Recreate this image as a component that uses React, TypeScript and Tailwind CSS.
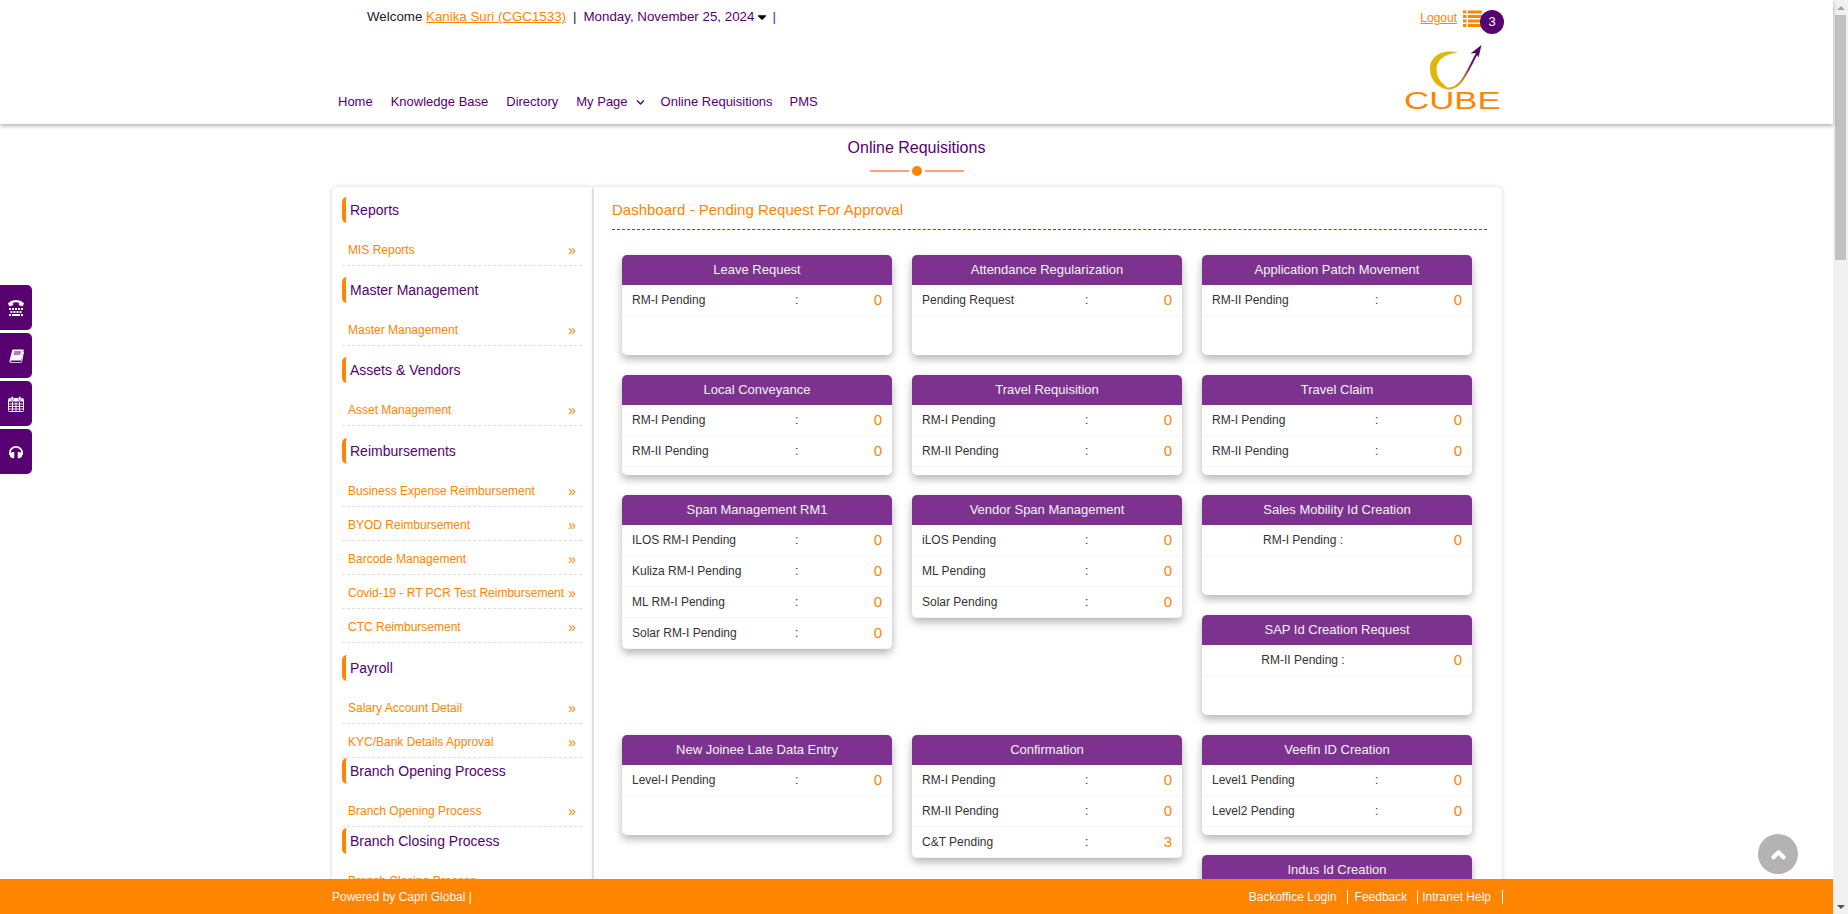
import { FaCaretDown, FaChevronDown, FaHeadphones, FaTty } from "react-icons/fa";

type Row = { label: string; value: number };
type Card = { title: string; rows: Row[]; centered?: boolean };

const r = (label: string, value = 0): Row => ({ label, value });

const sections = [
	{ title: "Reports", items: ["MIS Reports"], gap: "mb-[11px]" },
	{ title: "Master Management", items: ["Master Management"], gap: "mb-[11px]" },
	{ title: "Assets & Vendors", items: ["Asset Management"], gap: "mb-[12px]" },
	{
		title: "Reimbursements",
		items: [
			"Business Expense Reimbursement",
			"BYOD Reimbursement",
			"Barcode Management",
			"Covid-19 - RT PCR Test Reimbursement",
			"CTC Reimbursement",
		],
		gap: "mb-[12px]",
	},
	{ title: "Payroll", items: ["Salary Account Detail", "KYC/Bank Details Approval"], gap: "" },
	{ title: "Branch Opening Process", items: ["Branch Opening Process"], gap: "mb-[1px]" },
	{ title: "Branch Closing Process", items: ["Branch Closing Process"], gap: "" },
];

// one entry per grid cell, a cell can hold stacked cards
const cells: Card[][] = [
	[{ title: "Leave Request", rows: [r("RM-I Pending")] }],
	[{ title: "Attendance Regularization", rows: [r("Pending Request")] }],
	[{ title: "Application Patch Movement", rows: [r("RM-II Pending")] }],
	[{ title: "Local Conveyance", rows: [r("RM-I Pending"), r("RM-II Pending")] }],
	[{ title: "Travel Requisition", rows: [r("RM-I Pending"), r("RM-II Pending")] }],
	[{ title: "Travel Claim", rows: [r("RM-I Pending"), r("RM-II Pending")] }],
	[
		{
			title: "Span Management RM1",
			rows: [r("ILOS RM-I Pending"), r("Kuliza RM-I Pending"), r("ML RM-I Pending"), r("Solar RM-I Pending")],
		},
	],
	[{ title: "Vendor Span Management", rows: [r("iLOS Pending"), r("ML Pending"), r("Solar Pending")] }],
	[
		{ title: "Sales Mobility Id Creation", rows: [r("RM-I Pending :")], centered: true },
		{ title: "SAP Id Creation Request", rows: [r("RM-II Pending :")], centered: true },
	],
	[{ title: "New Joinee Late Data Entry", rows: [r("Level-I Pending")] }],
	[{ title: "Confirmation", rows: [r("RM-I Pending"), r("RM-II Pending"), r("C&T Pending", 3)] }],
	[
		{ title: "Veefin ID Creation", rows: [r("Level1 Pending"), r("Level2 Pending")] },
		{ title: "Indus Id Creation", rows: [] },
	],
];

const BookIcon = () => (
	<svg width="15" height="14" viewBox="0 0 15 14" fill="#fff">
		<path d="M3.4 0.5h10.8c.5 0 .7.4.6.8l-2.5 9.6c-.1.4-.4.6-.8.6H2.6c-.7 0-1 .5-.8 1 .1.3.4.4.8.4h9.6l.5-.1-.3 1H2.2C1 13.800.3 13 .5 11.800z" />
		<path d="M5.200 3h6.800M4.600 5h6.800" stroke="#570070" strokeWidth="1" />
		<path d="M14.500 3 12.600 12.600" stroke="#fff" strokeWidth="1" />
	</svg>
);

const CalendarIcon = () => (
	<svg width="16" height="16" viewBox="0 0 16 16" fill="none">
		<rect x="0.500" y="2.500" width="15" height="13" rx="1" stroke="#fff" />
		<rect x="1" y="2.500" width="14" height="3" fill="#fff" />
		<path d="M1 8h14M1 10.500h14M1 13h14M4.500 6v9M8 6v9M11.500 6v9" stroke="#fff" strokeWidth="0.900" />
		<rect x="3" y="0.500" width="2.500" height="4" rx="1" fill="#fff" stroke="#570070" strokeWidth="0.500" />
		<rect x="10.500" y="0.500" width="2.500" height="4" rx="1" fill="#fff" stroke="#570070" strokeWidth="0.500" />
	</svg>
);

const ListIcon = () => (
	<svg width="19" height="18" viewBox="0 0 19 18" fill="#ff8400">
		<rect x="0" y="0.500" width="3.500" height="3" />
		<rect x="5" y="0.500" width="14" height="3" />
		<rect x="0" y="5" width="3.500" height="3" />
		<rect x="5" y="5" width="14" height="3" />
		<rect x="0" y="9.500" width="3.500" height="3" />
		<rect x="5" y="9.500" width="14" height="3" />
		<rect x="0" y="14" width="3.500" height="3" />
		<rect x="5" y="14" width="14" height="3" />
	</svg>
);

const Logo = () => (
	<div className="mt-[11px] mr-[3px] flex w-[96px] flex-col items-center">
		<svg width="96" height="48" viewBox="0 0 96 48">
			<defs>
				<linearGradient id="swoosh" x1="0" y1="1" x2="1" y2="0">
					<stop offset="0" stopColor="#e3b505" />
					<stop offset="0.350" stopColor="#c9881c" />
					<stop offset="0.700" stopColor="#6b1b78" />
					<stop offset="1" stopColor="#570070" />
				</linearGradient>
			</defs>
			<path
				d="M54 8C44 4 26 8 26 24 26 36 36 45 47 44.500 40 41 32.500 34 32.500 24 32.500 15 42 8 54 8Z"
				fill="#e3b505"
			/>
			<path d="M44 43.500C56 44 62 30 74 6" fill="none" stroke="url(#swoosh)" strokeWidth="2" />
			<path d="M77.500 0 66.500 8.500 72 8 74.500 12.500Z" fill="#570070" />
		</svg>
		<span className="-mt-[1px] block origin-center scale-x-[1.45] text-[24px] leading-[18px] text-[#ff8400]">
			CUBE
		</span>
	</div>
);

const Header = () => (
	<header className="relative z-10 h-[124px] shrink-0 bg-white shadow-[0_2px_4px_rgba(0,0,0,0.3)]">
		<div className="ml-[332px] flex h-full w-[1171px] justify-between">
			<div className="flex flex-col">
				<div className="flex items-center pt-[9px] pl-[35px] text-[13.33px] leading-[16px] text-[#222]">
					<span>Welcome&nbsp;</span>
					<a className="text-[#ff8400] underline">Kanika Suri (CGC1533)</a>
					<span className="px-[7px]">|</span>
					<span className="text-[#570070]">Monday, November 25, 2024</span>
					<FaCaretDown className="ml-[1px] text-[14px] text-black" />
					<span className="ml-[3px] text-[#1f3a93]">|</span>
				</div>
				<nav className="mt-[69px] flex items-center gap-[18px] pl-[6px] text-[13px] leading-[16px] text-[#570070]">
					<a>Home</a>
					<a>Knowledge Base</a>
					<a>Directory</a>
					<a className="flex items-center gap-[8px]">
						My Page
						<FaChevronDown className="-mr-[2px] text-[9px]" />
					</a>
					<a>Online Requisitions</a>
					<a className="-ml-[1px]">PMS</a>
				</nav>
			</div>
			<div className="flex flex-col items-end pt-[10px]">
				<div className="-mr-[1px] flex items-start">
					<a className="mt-[1px] mr-[6px] text-[12px] leading-[14px] text-[#ff8400] underline">Logout</a>
					<ListIcon />
					<span className="-ml-[2px] flex h-[24px] w-[24px] items-center justify-center rounded-full bg-[#570070] text-[13px] text-white">
						3
					</span>
				</div>
				<Logo />
			</div>
		</div>
	</header>
);

const Sidebar = () => (
	<aside className="w-[260px] shrink-0 rounded-l-[5px] bg-white pt-[10px] pr-[10px] pl-[10px] shadow-[0_0_5px_rgba(0,0,0,0.18)]">
		{sections.map((s) => (
			<section key={s.title} className={s.gap}>
				<h3 className="flex h-[26px] items-center rounded-l-[5px] border-l-[4px] border-[#ff8400] pl-[4px] text-[14px] text-[#570070]">
					{s.title}
				</h3>
				<ul className="mt-[9px]">
					{s.items.map((item) => (
						<li
							key={item}
							className="flex h-[34px] items-center justify-between border-b border-dashed border-[#dddddd] pt-[2px] pr-[6px] pl-[6px] text-[12px] text-[#ff8400]"
						>
							<span>{item}</span>
							<span className="mt-[2px] text-[14px]">»</span>
						</li>
					))}
				</ul>
			</section>
		))}
	</aside>
);

const PendingCard = ({ card }: { card: Card }) => (
	<div className="min-h-[100px] w-[270px] overflow-hidden rounded-[5px] bg-white shadow-[0_4px_8px_rgba(0,0,0,0.3)]">
		<div className="flex h-[30px] items-center justify-center bg-[#7d3290] text-[13px] text-[#f2f2f2]">
			{card.title}
		</div>
		{card.rows.map((row) => (
			<div
				key={row.label}
				className="flex h-[31px] items-center border-b border-[#f5f5f5] px-[10px] text-[12px] text-[#333]"
			>
				{card.centered ? (
					<span className="w-[182px] text-center">{row.label}</span>
				) : (
					<>
						<span className="w-[163px]">{row.label}</span>
						<span>:</span>
					</>
				)}
				<span className="flex-1 text-right text-[15px] text-[#ff8400]">{row.value}</span>
			</div>
		))}
	</div>
);

const Dashboard = () => (
	<main className="ml-[2px] flex-1 rounded-r-[5px] bg-white pt-[12px] pr-[15px] pl-[18px] shadow-[0_0_5px_rgba(0,0,0,0.18)]">
		<h2 className="border-b border-dashed border-[#7d3290] pb-[8px] text-[15px] leading-[22px] text-[#ff8400]">
			Dashboard - Pending Request For Approval
		</h2>
		<div className="mt-[25px] ml-[10px] grid grid-cols-[270px_270px_270px] items-start gap-[20px]">
			{cells.map((cell) => (
				<div key={cell[0].title} className="flex flex-col gap-[20px]">
					{cell.map((card) => (
						<PendingCard key={card.title} card={card} />
					))}
				</div>
			))}
		</div>
	</main>
);

const Footer = () => (
	<footer className="h-[35px] shrink-0 bg-[#ff8400] text-[12px] text-[#f8f8f8]">
		<div className="ml-[332px] flex h-full w-[1171px] items-center justify-between">
			<span>Powered by Capri Global |</span>
			<div className="flex items-center">
				<a className="border-r border-white pr-[10px] leading-[14px]">Backoffice Login</a>
				<a className="border-r border-white pr-[10px] pl-[7px] leading-[14px]">Feedback</a>
				<a className="border-r border-white pr-[11px] pl-[4px] leading-[14px]">Intranet Help</a>
			</div>
		</div>
	</footer>
);

const Scrollbar = () => (
	<div className="flex w-[15px] shrink-0 flex-col items-center bg-[#f1f1f1]">
		<div className="flex h-[15px] items-center">
			<div className="h-0 w-0 border-x-[4px] border-b-[4px] border-x-transparent border-b-[#a3a3a3]" />
		</div>
		<div className="h-[245px] w-[11px] bg-[#c1c1c1]" />
		<div className="flex-1" />
		<div className="flex h-[15px] items-center">
			<div className="h-0 w-0 border-x-[4px] border-t-[4px] border-x-transparent border-t-[#505050]" />
		</div>
	</div>
);

const quickLinks = [
	<FaTty key="tty" className="text-[16px]" />,
	<BookIcon key="book" />,
	<CalendarIcon key="calendar" />,
	<FaHeadphones key="headphones" className="text-[14px]" />,
];

export default function App() {
	return (
		<div className="flex h-screen overflow-hidden bg-white font-['Liberation_Sans',Arial,sans-serif]">
			<div className="relative flex min-w-0 flex-1 flex-col">
				<Header />
				<div className="min-h-0 flex-1 overflow-hidden">
					<div className="flex flex-col items-center pt-[14px]">
						<h1 className="text-[16px] leading-[20px] text-[#570070]">Online Requisitions</h1>
						<div className="mt-[8px] flex items-center gap-[3px]">
							<span className="h-[2px] w-[39px] bg-[#ffa07a]" />
							<span className="h-[10px] w-[10px] rounded-full bg-[#ff8400]" />
							<span className="h-[2px] w-[39px] bg-[#ffa07a]" />
						</div>
					</div>
					<div className="mt-[11px] ml-[332px] flex w-[1170px]">
						<Sidebar />
						<Dashboard />
					</div>
				</div>
				<Footer />

				{/* floating quick links */}
				<div className="absolute top-[285px] left-0 z-20 flex flex-col gap-[3px]">
					{quickLinks.map((icon) => (
						<div
							key={icon.key}
							className="flex h-[45px] w-[32px] items-center justify-center rounded-r-[5px] bg-[#570070] text-white"
						>
							{icon}
						</div>
					))}
				</div>

				<div className="absolute top-[834px] left-[1758px] z-20 flex h-[40px] w-[40px] items-center justify-center rounded-full bg-[#b3b3b3]">
					<svg width="15" height="11" viewBox="0 0 15 11" fill="none">
						<path d="M2.500 8.200 7.500 3.200 12.500 8.200" stroke="#fff" strokeWidth="4.200" strokeLinecap="round" strokeLinejoin="round" />
					</svg>
				</div>
			</div>
			<Scrollbar />
		</div>
	);
}
